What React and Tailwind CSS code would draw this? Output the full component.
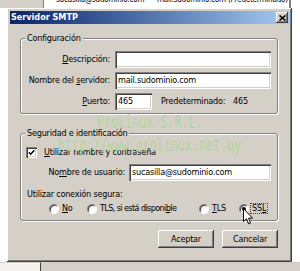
import React from "react";

const raised =
  "shadow-[inset_-1px_-1px_#404040,inset_1px_1px_#ffffff,inset_-2px_-2px_#808080,inset_2px_2px_#d4d0c8]";
const sunken =
  "shadow-[inset_1px_1px_#808080,inset_2px_2px_#404040,inset_-1px_-1px_#ffffff,inset_-2px_-2px_#d4d0c8]";

const TextBox = ({ value = "", className = "" }) => (
  <div className={`h-[17px] bg-white ${sunken} flex items-center pl-[3px] ${className}`}>
    {value}
  </div>
);

const Radio = ({ checked }) => (
  <span className="w-[10px] h-[10px] shrink-0 rounded-full bg-white border border-t-[#808080] border-l-[#808080] border-r-white border-b-white shadow-[inset_1px_1px_#404040] flex items-center justify-center">
    {checked && <span className="w-[4px] h-[4px] rounded-full bg-black" />}
  </span>
);

const Button = ({ children }) => (
  <button className={`w-[56px] h-[18px] bg-[#d4d0c8] ${raised} flex items-center justify-center`}>
    {children}
  </button>
);

// watermark text: narrow mono, stretched via transform
const wm =
  "absolute pointer-events-none whitespace-nowrap [transform-origin:0_0] [transform:scaleX(0.65)] tracking-normal text-[18px] leading-[18px] text-[#b2d69b] font-['DejaVu_Sans_Mono',monospace]";

export default function App() {
  return (
    <div className="relative w-[300px] h-[271px] overflow-hidden bg-white text-black text-[9px] leading-[11px] tracking-[-0.2px] font-['DejaVu_Sans_Condensed','Liberation_Sans',sans-serif]">
      {/* window behind, top edge */}
      <div className="absolute left-0 top-0 w-[300px] h-[8px] flex">
        <div className="w-[44px] bg-[#d4d0c8] border-r border-[#808080]" />
        <div className="w-[245px] overflow-hidden text-[8px]">
          <div className="flex whitespace-nowrap -mt-[6px] pl-[12px]">
            <span className="w-[101px]">sucasilla@sudominio.com</span>
            <span>mail.sudominio.com (Predeterminado)</span>
          </div>
        </div>
        <div className="w-[2px] bg-[#808080]" />
        <div className="flex-1 bg-white" />
      </div>

      {/* window behind, bottom edge */}
      <div className="absolute left-0 top-[262px] w-[300px] h-[9px] flex">
        <div className="w-[41px] bg-[#f4f3f0] border-t border-[#d4d0c8] border-r border-r-[#404040]" />
        <div className="flex-1 bg-[#d4d0c8]" />
      </div>

      {/* dialog */}
      <div className={`absolute left-[7px] top-[8px] w-[285px] h-[254px] bg-[#d4d0c8] ${raised} flex flex-col`}>
        <div className="mx-[3px] mt-[3px] h-[13px] bg-linear-to-r from-[#0a246a] to-[#a6caf0] flex items-center justify-between pl-[1px]">
          <span className="font-bold text-white tracking-normal">Servidor SMTP</span>
          <div className={`w-[12px] h-[11px] mr-[1px] bg-[#d4d0c8] ${raised} flex items-center justify-center`}>
            <svg width="7" height="6" viewBox="0 0 7 6">
              <path d="M0.5 0.5 L6.5 5.5 M6.5 0.5 L0.5 5.5" stroke="#000" strokeWidth="1.6" />
            </svg>
          </div>
        </div>

        <div className="pl-[13px] pr-[14px]">
          <fieldset className="mt-[9px] border border-[#808080] rounded-[3px] shadow-[inset_1px_1px_#ffffff,1px_1px_#ffffff] pt-[7px] pb-[3px]">
            <legend className="ml-[4px] px-[2px] bg-[#d4d0c8]">Configuración</legend>
            <div className="flex flex-col gap-[4px]">
              <div className="flex items-center">
                <span className="w-[89px] text-right">
                  <u>D</u>escripción:
                </span>
                <TextBox className="ml-[5px] w-[156px]" />
              </div>
              <div className="flex items-center">
                <span className="w-[89px] text-right">
                  Nombre del <u>s</u>ervidor:
                </span>
                <TextBox className="ml-[5px] w-[156px]" value="mail.sudominio.com" />
              </div>
              <div className="flex items-center">
                <span className="w-[89px] text-right">
                  <u>P</u>uerto:
                </span>
                <TextBox className="ml-[5px] w-[37px]" value="465" />
                <span className="ml-[9px] w-[72px]">Predeterminado:</span>
                <span>465</span>
              </div>
            </div>
          </fieldset>

          <fieldset className="mt-[14px] border border-[#808080] rounded-[3px] shadow-[inset_1px_1px_#ffffff,1px_1px_#ffffff] pt-[8px] pb-[6px]">
            <legend className="ml-[4px] px-[2px] bg-[#d4d0c8]">Seguridad e identificación</legend>
            <div className="flex items-center h-[11px] pl-[5px]">
              <span className={`w-[11px] h-[11px] bg-white ${sunken} flex items-center justify-center`}>
                <svg width="7" height="7" viewBox="0 0 7 7">
                  <path d="M0.8 3.2 L2.7 5.2 L6.3 1.2" fill="none" stroke="#000" strokeWidth="1.5" />
                </svg>
              </span>
              <span className="ml-[7px]">
                <u>U</u>tilizar nombre y contraseña
              </span>
            </div>
            <div className="flex items-center mt-[6px]">
              <span className="w-[104px] text-right">
                No<u>m</u>bre de usuario:
              </span>
              <TextBox className="ml-[4px] w-[142px]" value="sucasilla@sudominio.com" />
            </div>
            <div className="mt-[8px] pl-[6px]">Utilizar conexión segura:</div>
            <div className="mt-[3px] pl-[28px] flex items-center h-[11px]">
              <div className="w-[38px] flex items-center">
                <Radio />
                <span className="ml-[3px]">
                  <u>N</u>o
                </span>
              </div>
              <div className="w-[112px] flex items-center">
                <Radio />
                <span className="ml-[3px] tracking-[-0.6px] whitespace-nowrap">
                  TLS, si está disponi<u>b</u>le
                </span>
              </div>
              <div className="w-[40px] flex items-center">
                <Radio />
                <span className="ml-[3px]">
                  <u>T</u>LS
                </span>
              </div>
              <div className="flex items-center">
                <Radio checked />
                <span className="ml-[1px] px-[1px] h-[11px] flex items-center border border-dotted border-[#404040]">
                  SS<u>L</u>
                </span>
              </div>
            </div>
          </fieldset>

          <div className="mt-[9px] flex justify-end gap-[8px]">
            <Button>Aceptar</Button>
            <Button>Cancelar</Button>
          </div>
        </div>
      </div>

      {/* watermark */}
      <div className={`${wm} left-[97px] top-[113px]`}>ProLinux S.R.L.</div>
      <div className={`${wm} left-[58px] top-[136px]`}>http://www.prolinux.net.uy</div>

      {/* mouse pointer */}
      <svg className="absolute left-[243px] top-[208px]" width="11" height="17" viewBox="0 0 11 17">
        <path
          d="M0.5 0.5 L0.5 13.5 L3.5 10.8 L5.6 15.8 L7.6 14.9 L5.5 10.2 L9.5 10.2 Z"
          fill="#fff"
          stroke="#000"
          strokeWidth="1"
          strokeLinejoin="miter"
        />
      </svg>
    </div>
  );
}
